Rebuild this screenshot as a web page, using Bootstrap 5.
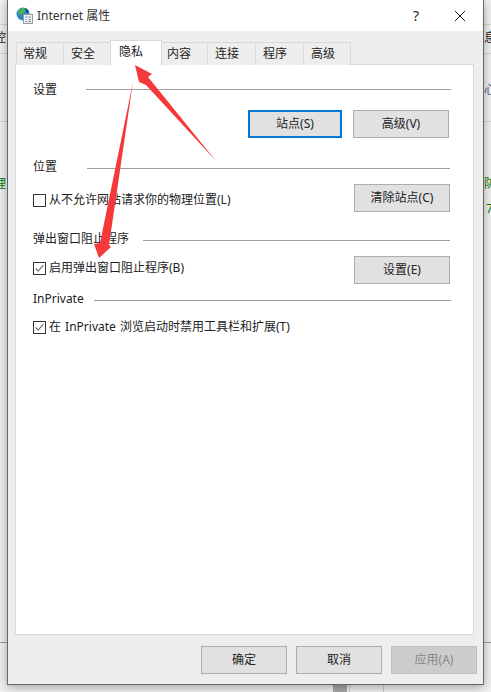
<!DOCTYPE html>
<html lang="zh">
<head>
<meta charset="utf-8">
<title>Internet 属性</title>
<link href="https://cdn.jsdelivr.net/npm/bootstrap@5.3.0/dist/css/bootstrap.min.css" rel="stylesheet">
<style>
html,body{height:100%;overflow:hidden}
body{background:#f2f2f2;font:12px/18px "Noto Sans","Noto Sans CJK SC",sans-serif;color:#222;position:relative}
.bg-line{position:absolute;height:1px;background:#d4d4d4}
.bg-l{left:0;width:7px}.bg-r{left:484px;width:7px}
.bg-t{position:absolute;font-size:12px;line-height:14px}
.win{position:absolute;left:7px;top:0;width:477px;height:685px;background:#eee;border:solid #666;border-width:0 1px 1px 1px;box-shadow:0 2px 10px rgba(0,0,0,.35)}
.tbar{height:31px;background:#fff;padding:0 0 0 8px;color:#333;font-size:12px}
.tbar-q{width:14px;height:14px;margin-right:30px;font-size:14px;line-height:14px;color:#222;text-align:center}
.tbar-x{width:14px;height:14px;margin-right:16px}
.tabs-strip{height:25px;margin:9px 0 0 9px;padding:0;list-style:none;position:relative;z-index:1}
.tb{height:23px;margin-top:2px;background:#eee;border:1px solid #d9d9d9;border-bottom:0;margin-left:-1px;padding-left:7px;line-height:22px;color:#222}
.tb.first{padding-left:6px}
.tb.narrow{padding-left:5px}
.tb.act{height:26px;margin-top:0;background:#fff;line-height:22px;padding-left:8px;position:relative}
.pane{width:459px;height:571px;margin:-1px 0 0 7px;background:#fff;border:1px solid #d9d9d9;padding:15px 23px 0 17px}
.sec{height:18px}
.sec span{padding-top:2px}
.sec-l{flex:1;height:1px;background:#a0a0a0;margin-top:4px}
.sec-f{margin-top:0;margin-left:29px;margin-right:-1px}
.sec-p{margin-left:30px}
.sec-w{margin-left:14px}
.sec-i{margin-left:10px;margin-right:-1px}
.sbtn{height:28px;padding:0;border-radius:0;background:#e1e1e1;border:1px solid #adadad;color:#222;font-size:12px;line-height:26px}
.sbtn:hover{background:#e1e1e1;border-color:#adadad;color:#222}
.w94{width:94px}.w96{width:96px}.w86{width:86px}
.foc{border:2px solid #0078d7;line-height:24px}
.foc:hover{border-color:#0078d7}
.sbtn.dis,.sbtn.dis:disabled{background:#ccc;border-color:#bfbfbf;color:#888;opacity:1}
.ck[type=checkbox]{width:13px;height:13px;margin:0 3px 0 0;border:1px solid #333;border-radius:0;background-color:#fff;flex:none;float:none}
.ck:checked{background-color:#fff;border-color:#333;background-image:url("data:image/svg+xml,%3Csvg xmlns='http://www.w3.org/2000/svg' viewBox='0 0 13 13'%3E%3Cpath d='M2 6.500l3 3 6-7' fill='none' stroke='%23666' stroke-width='1.300'/%3E%3C/svg%3E");background-size:100% 100%}
.lb-d{margin-top:4px}.lb-u{margin-bottom:4px}
.wide{word-spacing:1px}
.m12{margin-top:12px}.m19{margin-top:19px}.m9{margin-top:9px}.m17{margin-top:17px}.m5{margin-top:5px}.m11{margin-top:11px}
.r1{margin-right:1px}
.gap11{gap:11px}
.foot{height:49px;padding:11px 0 0 0;margin-left:193px;gap:9px}
.arrows{position:absolute;left:0;top:0;width:491px;height:692px;pointer-events:none;z-index:5}
.bk{position:absolute;left:333px;top:685px;width:14px;height:7px;background:#a8a8a8}
.vln{position:absolute;top:685px;height:7px;width:1px;background:#ccc}
.bg-g{color:#0a7a0a}.bg-b{color:#4a6a8a}
</style>
</head>
<body>
<div class="bg-line bg-l" style="top:24px"></div><div class="bg-line bg-l" style="top:53px"></div><div class="bg-line bg-l" style="top:121px"></div>
<div class="bg-line bg-r" style="top:24px"></div><div class="bg-line bg-r" style="top:53px"></div><div class="bg-line bg-r" style="top:121px"></div>
<div class="bg-line bg-l" style="top:642px;background:#999"></div>
<div class="bg-line bg-r" style="top:642px;background:#999"></div>
<div class="bg-t" style="left:-6px;top:31px">控</div>
<div class="bg-t bg-g" style="left:-6px;top:177px">理</div>
<div class="bg-t" style="left:484px;top:31px">息</div>
<div class="bg-t bg-b" style="left:484px;top:83px">心</div>
<div class="bg-t bg-g" style="left:484px;top:177px">防</div>
<div class="bg-t bg-g" style="left:486px;top:202px">7</div>
<div class="bk"></div><div class="vln" style="left:349px"></div><div class="vln" style="left:383px"></div>

<div class="win d-flex flex-column">
  <div class="tbar d-flex align-items-center">
    <svg width="17" height="17" viewBox="0 0 17 17" class="me-1"><circle cx="7" cy="7" r="6.500" fill="#2f86c9"/><path d="M2 4c2-3 6-4 8-2 1 2-1 3-3 4-1 2-3 2-5 1z" fill="#4fb05a"/><path d="M9 1c2 .5 3.500 2 4 4l-3 1z" fill="#164f8c"/><rect x="7.500" y="7.500" width="9" height="9" fill="#f2f2f2" stroke="#9a9a9a"/><path d="M9.500 10h2M9.500 12.500h1M9.500 14.500h2" stroke="#3a8fd0"/><path d="M12.500 10h2.500M12.500 12.500h2.500M12.500 14.500h2.500" stroke="#888"/></svg>
    <span>Internet 属性</span>
    <span class="ms-auto tbar-q">?</span>
    <svg class="tbar-x" viewBox="0 0 14 14"><path d="M2 2l10 10M12 2L2 12" stroke="#222" stroke-width="1" fill="none"/></svg>
  </div>
  <ul class="tabs-strip d-flex">
    <li class="tb first" style="width:48px">常规</li>
    <li class="tb" style="width:48px">安全</li>
    <li class="tb act" style="width:52px">隐私</li>
    <li class="tb narrow" style="width:47px">内容</li>
    <li class="tb" style="width:49px">连接</li>
    <li class="tb" style="width:49px">程序</li>
    <li class="tb" style="width:48px">高级</li>
  </ul>
  <div class="pane">
    <div class="sec d-flex align-items-center"><span>设置</span><div class="sec-l sec-f"></div></div>
    <div class="d-flex justify-content-end gap11 m12 r1">
      <button class="btn sbtn foc w94">站点(S)</button>
      <button class="btn sbtn w96">高级(V)</button>
    </div>
    <div class="sec d-flex align-items-center m19"><span>位置</span><div class="sec-l sec-p"></div></div>
    <div class="d-flex align-items-center justify-content-between m9">
      <label class="d-flex align-items-center lb-d"><input type="checkbox" class="form-check-input ck">从不允许网站请求你的物理位置(L)</label>
      <button class="btn sbtn w96">清除站点(C)</button>
    </div>
    <div class="sec d-flex align-items-center m17"><span>弹出窗口阻止程序</span><div class="sec-l sec-w"></div></div>
    <div class="d-flex align-items-center justify-content-between m9">
      <label class="d-flex align-items-center lb-u"><input type="checkbox" class="form-check-input ck" checked>启用弹出窗口阻止程序(B)</label>
      <button class="btn sbtn w96">设置(E)</button>
    </div>
    <div class="sec d-flex align-items-center m5"><span>InPrivate</span><div class="sec-l sec-i"></div></div>
    <div class="d-flex align-items-center m11">
      <label class="d-flex align-items-center wide"><input type="checkbox" class="form-check-input ck" checked>在 InPrivate 浏览启动时禁用工具栏和扩展(T)</label>
    </div>
  </div>
  <div class="foot d-flex">
    <button class="btn sbtn w86">确定</button>
    <button class="btn sbtn w86">取消</button>
    <button class="btn sbtn w86 dis" disabled>应用(A)</button>
  </div>
</div>
<svg class="arrows" viewBox="0 0 491 692">
  <path d="M135 65L152 74L148 77L216 161L146 85L139 82Z" fill="#f5393a"/>
  <path d="M133 82L109 245L111 247L99 258L94 244L100 243Z" fill="#f5393a"/>
</svg>
<script src="https://cdn.jsdelivr.net/npm/bootstrap@5.3.0/dist/js/bootstrap.bundle.min.js"></script>
</body>
</html>
